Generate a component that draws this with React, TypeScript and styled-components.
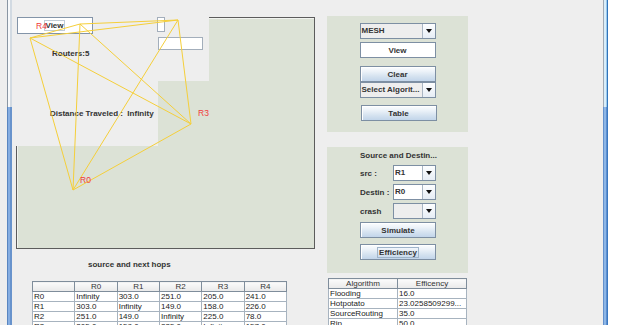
import React from "react";
import styled, { createGlobalStyle } from "styled-components";

const GlobalStyle = createGlobalStyle`
  html, body { margin: 0; padding: 0; background: #eeeeee; overflow: hidden; }
  body { font-family: "Liberation Sans", Arial, sans-serif; }
  #root { width: 618px; height: 325px; }
`;

const Window = styled.div`
  display: flex;
  width: 618px;
  height: 325px;
  overflow: hidden;
  background: #eeeeee;
`;

const Gutter = styled.div<{ $w: number; $bg: string }>`
  flex: none;
  width: ${(p) => p.$w}px;
  background: ${(p) => p.$bg};
`;

const FrameStrip = styled.div<{ $w: number }>`
  flex: none;
  display: flex;
  flex-direction: column;
  width: ${(p) => p.$w}px;
`;

const FrameGlass = styled.div<{ $part: "top" | "bottom"; $side: "left" | "right" }>`
  height: ${(p) => (p.$part === "top" ? "107px" : "auto")};
  flex: ${(p) => (p.$part === "top" ? "none" : "1")};
  background: ${(p) =>
    p.$side === "left"
      ? p.$part === "top"
        ? "linear-gradient(to right, #8a96a3 0 1px, #f7f9fb 1px 3px, #d2dae2 3px)"
        : "linear-gradient(to right, #5a86c0 0 1px, #86aee2 1px 3px, #6893cc 3px)"
      : p.$part === "top"
      ? "linear-gradient(to right, #9ea9b5 0 1px, #d9eefa 1px 3px, #9cc9ec 3px 4px, #2f74bb 4px)"
      : "linear-gradient(to right, #6491cc 0 1px, #8db6e6 1px 3px, #5d8fd0 3px 4px, #3a78c0 4px)"};
`;

const Content = styled.div`
  flex: none;
  display: flex;
  width: 591px;
`;

const LeftColumn = styled.div`
  flex: none;
  display: flex;
  flex-direction: column;
  align-items: flex-start;
  padding-left: 4px;
  width: 299px;
  & > * { flex-shrink: 0; }
`;

const RightColumn = styled.div`
  flex: none;
  display: flex;
  flex-direction: column;
  align-items: flex-start;
  margin-left: 12px;
  width: 141px;
  & > * { flex-shrink: 0; }
`;

const Canvas = styled.div`
  position: relative;
  box-sizing: border-box;
  width: 299px;
  height: 232px;
  margin-top: 17px;
  background: #dce2d6;
  border: 1px solid #5c5c5c;
  box-shadow: inset 1px 1px 0 #f1f3ef;
`;

const RepaintPatch = styled.div<{ $x: number; $y: number; $w: number; $h: number }>`
  position: absolute;
  left: ${(p) => p.$x}px;
  top: ${(p) => p.$y}px;
  width: ${(p) => p.$w}px;
  height: ${(p) => p.$h}px;
  background: #eeeeee;
`;

const CanvasField = styled.div<{ $x: number; $y: number; $w: number; $h: number }>`
  position: absolute;
  box-sizing: border-box;
  left: ${(p) => p.$x}px;
  top: ${(p) => p.$y}px;
  width: ${(p) => p.$w}px;
  height: ${(p) => p.$h}px;
  background: #ffffff;
  border: 1px solid #a3aebb;
`;

const CanvasViewField = styled(CanvasField)`
  border-color: #8394a8;
`;

const InnerViewButton = styled.span`
  position: absolute;
  box-sizing: border-box;
  left: 26px;
  top: 2px;
  width: 21px;
  height: 11px;
  border: 1px solid #c2ccd6;
  font-size: 8px;
  font-weight: bold;
  line-height: 9px;
  color: #333333;
  text-align: center;
`;

const CanvasText = styled.span<{ $x: number; $y: number; $tone: "label" | "node" }>`
  position: absolute;
  left: ${(p) => p.$x}px;
  top: ${(p) => p.$y}px;
  font-size: ${(p) => (p.$tone === "node" ? "8.5px" : "8px")};
  font-weight: ${(p) => (p.$tone === "node" ? "normal" : "bold")};
  line-height: 10px;
  white-space: pre;
  color: ${(p) => (p.$tone === "node" ? "#f03a3a" : "#333333")};
`;

const LinkLayer = styled.svg`
  position: absolute;
  left: 0;
  top: 0;
  overflow: visible;
`;

const SectionTitle = styled.div`
  margin: 11px 0 0 72px;
  font-size: 8px;
  font-weight: bold;
  line-height: 10px;
  color: #333333;
`;

const GridTable = styled.table<{ $w: number; $mt: number; $ml: number }>`
  border-collapse: collapse;
  table-layout: fixed;
  width: ${(p) => p.$w}px;
  margin: ${(p) => p.$mt}px 0 0 ${(p) => p.$ml}px;
  font-size: 8px;
  color: #222222;
  border: 1px solid #7a8a99;
`;

const HeadCell = styled.th`
  height: 9px;
  padding: 0;
  font-weight: normal;
  text-align: center;
  line-height: 8px;
  background: linear-gradient(#fbfbfb, #e9e9e9);
  border: 1px solid #7f8d9b;
  color: #333333;
  white-space: nowrap;
  overflow: hidden;
`;

const Cell = styled.td`
  height: 9px;
  padding: 0 0 0 1px;
  line-height: 9px;
  background: #ffffff;
  border: 1px solid #a7b3bf;
  white-space: nowrap;
  overflow: hidden;
  color: #222222;
`;

const ControlPanel = styled.div<{ $h: number; $mt: number }>`
  box-sizing: border-box;
  display: flex;
  flex-direction: column;
  width: 141px;
  height: ${(p) => p.$h}px;
  margin-top: ${(p) => p.$mt}px;
  background: #dce2d6;
  & > * { flex-shrink: 0; }
`;

const ToolsPanel = styled(ControlPanel)`
  align-items: center;
  padding-top: 7px;
`;

const RoutePanel = styled(ControlPanel)`
  align-items: flex-start;
  padding: 4px 0 0 33px;
`;

const SwingButton = styled.div<{ $mt?: number; $shift?: number }>`
  box-sizing: border-box;
  display: flex;
  align-items: center;
  justify-content: center;
  width: 76px;
  height: 16px;
  margin: ${(p) => p.$mt ?? 0}px 0 0 ${(p) => p.$shift ?? 0}px;
  border: 1px solid #7d8fa3;
  background: linear-gradient(to bottom, #fbfdff 0%, #edf3f9 30%, #d3e1ef 70%, #c2d5ea 100%);
  box-shadow: inset 1px 1px 0 #ffffff;
  font-size: 8px;
  font-weight: bold;
  color: #333333;
`;

const WhiteButton = styled(SwingButton)`
  background: #ffffff;
  box-shadow: none;
`;

const FocusRing = styled.span`
  border: 1px solid #9fb4ca;
  padding: 0 1px;
  line-height: 9px;
`;

const Combo = styled.div<{ $w: number; $fill: string }>`
  box-sizing: border-box;
  display: flex;
  width: ${(p) => p.$w}px;
  height: 16px;
  border: 1px solid #7d8fa3;
  background: ${(p) => p.$fill};
`;

const ComboValue = styled.span`
  flex: 1;
  padding-left: 1px;
  font-size: 8px;
  font-weight: bold;
  line-height: 14px;
  color: #333333;
  white-space: nowrap;
  overflow: hidden;
`;

const ComboArrow = styled.span`
  flex: none;
  display: flex;
  align-items: center;
  justify-content: center;
  width: 12px;
  border-left: 1px solid #aab6c3;
  background: linear-gradient(#fdfeff, #e6edf5);
  &::after {
    content: "";
    border-left: 3.5px solid transparent;
    border-right: 3.5px solid transparent;
    border-top: 4px solid #111111;
  }
`;

const PanelTitle = styled.div`
  font-size: 8px;
  font-weight: bold;
  line-height: 10px;
  color: #333333;
  white-space: nowrap;
`;

const FieldRow = styled.div<{ $mt: number }>`
  display: flex;
  align-items: center;
  width: 76px;
  height: 16px;
  margin-top: ${(p) => p.$mt}px;
`;

const FieldLabel = styled.span`
  width: 33px;
  font-size: 8px;
  font-weight: bold;
  color: #333333;
`;

const nodes: Record<string, [number, number]> = {
  R0: [56, 172],
  R1: [161, 2],
  R2: [63, 6],
  R3: [174, 106],
  R4: [13, 20],
};

const names = Object.keys(nodes);
const edges: [string, string][] = [];
names.forEach((a, i) => names.slice(i + 1).forEach((b) => edges.push([a, b])));

const hops = [
  ["R0", "Infinity", "303.0", "251.0", "205.0", "241.0"],
  ["R1", "303.0", "Infinity", "149.0", "158.0", "226.0"],
  ["R2", "251.0", "149.0", "Infinity", "225.0", "78.0"],
  ["R3", "205.0", "158.0", "225.0", "Infinity", "157.0"],
];

const efficiency = [
  ["Flooding", "16.0"],
  ["Hotpotato", "23.0258509299..."],
  ["SourceRouting", "35.0"],
  ["Rip", "50.0"],
];

export default function App() {
  return (
    <>
      <GlobalStyle />
      <Window>
        <Gutter $w={7} $bg="#eeeeee" />
        <FrameStrip $w={5}>
          <FrameGlass $part="top" $side="left" />
          <FrameGlass $part="bottom" $side="left" />
        </FrameStrip>
        <Content>
          <LeftColumn>
            <Canvas>
              <RepaintPatch $x={-1} $y={-1} $w={193} $h={64} />
              <RepaintPatch $x={-1} $y={63} $w={142} $h={65} />
              <CanvasViewField $x={0} $y={-1} $w={76} $h={17}>
                <InnerViewButton>View</InnerViewButton>
              </CanvasViewField>
              <CanvasField $x={140} $y={-1} $w={8} $h={15} />
              <CanvasField $x={141} $y={19} $w={45} $h={13} />
              <CanvasText $x={35} $y={31} $tone="label">Routers:5</CanvasText>
              <CanvasText $x={33} $y={91} $tone="label">Distance Traveled :  Infinity</CanvasText>
              <LinkLayer width={297} height={230}>
                {edges.map(([a, b]) => (
                  <line
                    key={a + b}
                    x1={nodes[a][0]}
                    y1={nodes[a][1]}
                    x2={nodes[b][0]}
                    y2={nodes[b][1]}
                    stroke="#f5cf3a"
                    strokeWidth={1}
                  />
                ))}
              </LinkLayer>
              <CanvasText $x={19} $y={3} $tone="node">R4</CanvasText>
              <CanvasText $x={181} $y={90} $tone="node">R3</CanvasText>
              <CanvasText $x={63} $y={157} $tone="node">R0</CanvasText>
            </Canvas>
            <SectionTitle>source and next hops</SectionTitle>
            <GridTable $w={255} $mt={11} $ml={16}>
              <thead>
                <tr>
                  <HeadCell />
                  {["R0", "R1", "R2", "R3", "R4"].map((h) => (
                    <HeadCell key={h}>{h}</HeadCell>
                  ))}
                </tr>
              </thead>
              <tbody>
                {hops.map((row) => (
                  <tr key={row[0]}>
                    {row.map((v, i) => (
                      <Cell key={i}>{v}</Cell>
                    ))}
                  </tr>
                ))}
              </tbody>
            </GridTable>
          </LeftColumn>
          <RightColumn>
            <ToolsPanel $h={116} $mt={16}>
              <Combo $w={76} $fill="#eeeeee">
                <ComboValue>MESH</ComboValue>
                <ComboArrow />
              </Combo>
              <WhiteButton $mt={3}>View</WhiteButton>
              <SwingButton $mt={8}>Clear</SwingButton>
              <Combo $w={76} $fill="#eeeeee">
                <ComboValue>Select Algorit...</ComboValue>
                <ComboArrow />
              </Combo>
              <SwingButton $mt={7} $shift={2}>Table</SwingButton>
            </ToolsPanel>
            <RoutePanel $h={126} $mt={15}>
              <PanelTitle>Source and Destin...</PanelTitle>
              <FieldRow $mt={4}>
                <FieldLabel>src :</FieldLabel>
                <Combo $w={43} $fill="#ffffff">
                  <ComboValue>R1</ComboValue>
                  <ComboArrow />
                </Combo>
              </FieldRow>
              <FieldRow $mt={3}>
                <FieldLabel>Destin :</FieldLabel>
                <Combo $w={43} $fill="#ffffff">
                  <ComboValue>R0</ComboValue>
                  <ComboArrow />
                </Combo>
              </FieldRow>
              <FieldRow $mt={3}>
                <FieldLabel>crash</FieldLabel>
                <Combo $w={43} $fill="#eeeeee">
                  <ComboValue />
                  <ComboArrow />
                </Combo>
              </FieldRow>
              <SwingButton $mt={3}>Simulate</SwingButton>
              <SwingButton $mt={6}>
                <FocusRing>Efficiency</FocusRing>
              </SwingButton>
            </RoutePanel>
            <GridTable $w={139} $mt={5} $ml={1}>
              <thead>
                <tr>
                  <HeadCell>Algorithm</HeadCell>
                  <HeadCell>Efficency</HeadCell>
                </tr>
              </thead>
              <tbody>
                {efficiency.map((row) => (
                  <tr key={row[0]}>
                    <Cell>{row[0]}</Cell>
                    <Cell>{row[1]}</Cell>
                  </tr>
                ))}
              </tbody>
            </GridTable>
          </RightColumn>
        </Content>
        <FrameStrip $w={5}>
          <FrameGlass $part="top" $side="right" />
          <FrameGlass $part="bottom" $side="right" />
        </FrameStrip>
        <Gutter $w={10} $bg="#ffffff" />
      </Window>
    </>
  );
}
